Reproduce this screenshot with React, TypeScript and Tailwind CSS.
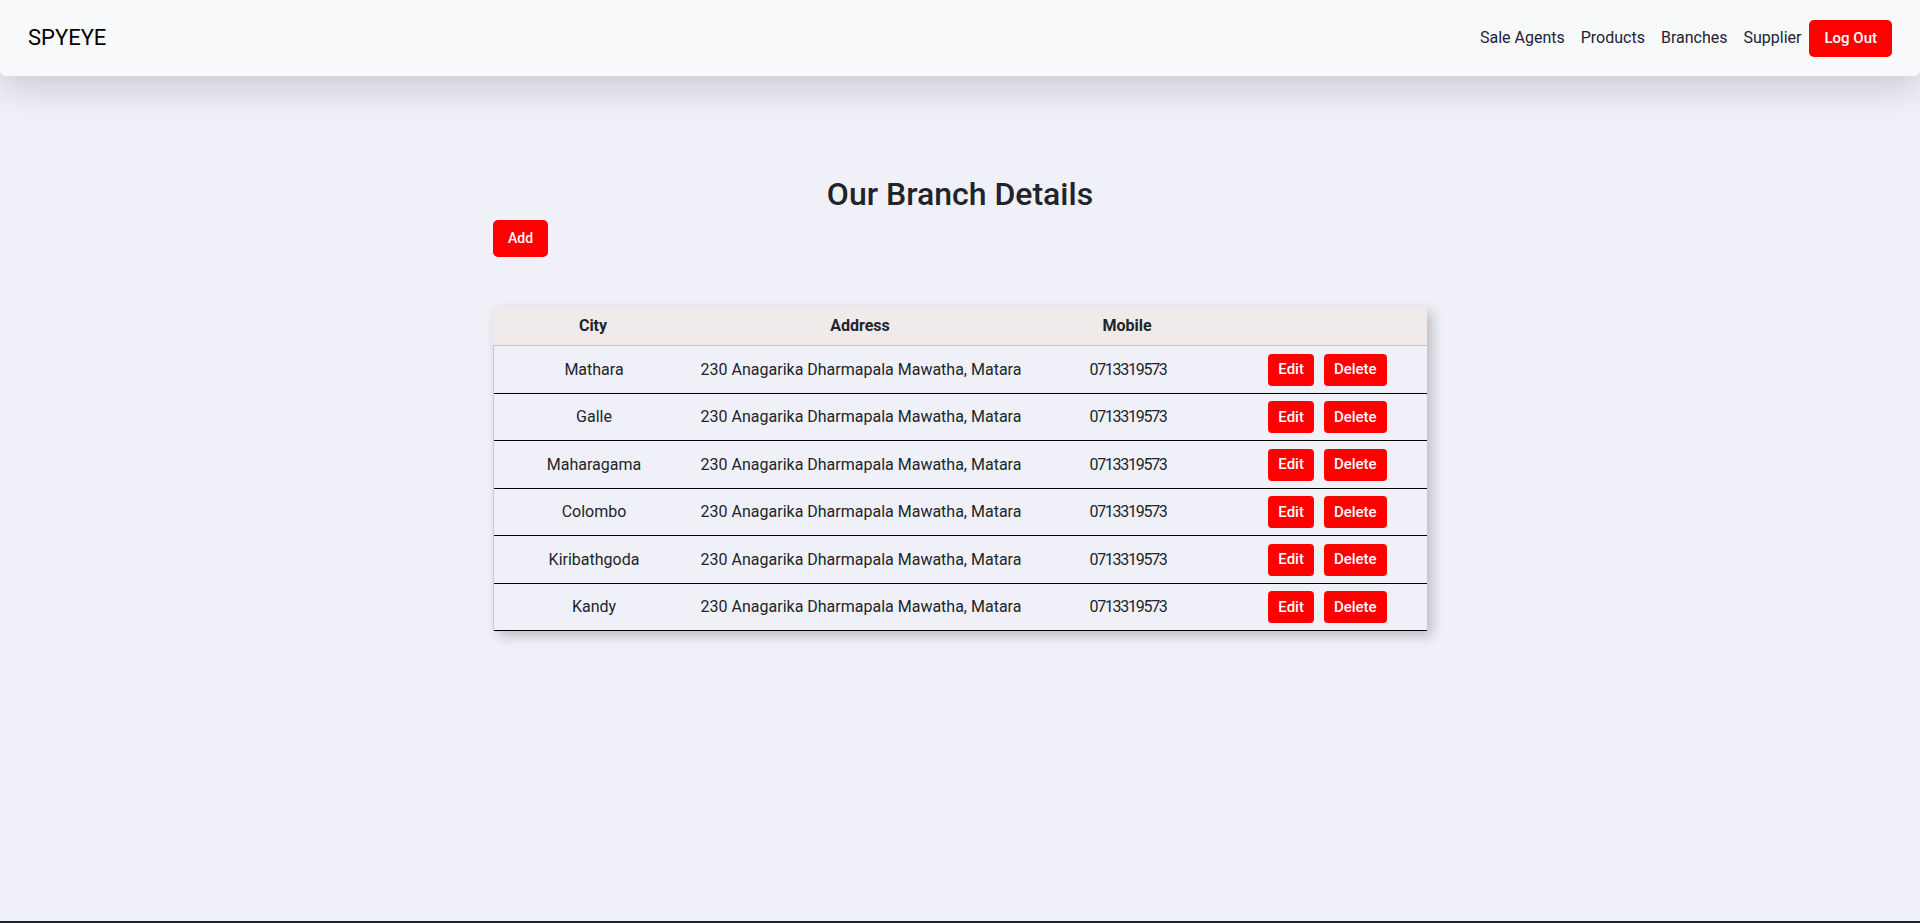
import React from "react";

const branches = [
  "Mathara",
  "Galle",
  "Maharagama",
  "Colombo",
  "Kiribathgoda",
  "Kandy",
];

export default function App() {
  return (
    <div className="min-h-screen bg-[#f0f0f8] text-[#212529] [font-family:Roboto,'Noto_Sans',sans-serif]">
      <div className="flex min-h-[921px] flex-col">
        <nav className="flex h-[76px] items-center justify-between rounded-b-[6px] bg-[#f8f9fb] px-[28px] shadow-[0_12px_36px_rgba(0,0,0,0.16)]">
          <span className="text-[22px] leading-none text-black">SPYEYE</span>
          <div className="flex items-center">
            <a className="px-2 text-[16px] text-[#1e2235]">Sale Agents</a>
            <a className="px-2 text-[16px] text-[#1e2235]">Products</a>
            <a className="px-2 text-[16px] text-[#1e2235]">Branches</a>
            <a className="px-2 text-[16px] text-[#1e2235]">Supplier</a>
            <button className="ml-0 h-[37px] rounded-[5px] bg-[#ff0000] px-[15px] text-[15px] font-medium text-white">
              Log Out
            </button>
          </div>
        </nav>

        <main className="mx-auto w-[934px] pt-[99px]">
          <h2 className="mb-[7px] text-center text-[32px] font-medium leading-[1.2]">
            Our Branch Details
          </h2>
          <button className="h-[37px] rounded-[5px] bg-[#ff0000] px-[15px] text-[14px] font-medium text-white">
            Add
          </button>

          <div className="mt-[50px] shadow-[5px_5px_12px_rgba(0,0,0,0.22)]">
            <div className="grid h-[39px] grid-cols-[200px_334px_200px_200px] items-center border-b border-[#c8c8c8] bg-[#f0eaea] text-[16px] font-bold">
              <div className="text-center">City</div>
              <div className="text-center">Address</div>
              <div className="text-center">Mobile</div>
              <div />
            </div>
            <div className="border-l border-[#c8c8c8]">
              {branches.map((city) => (
                <div
                  key={city}
                  className="grid h-[47.5px] grid-cols-[200px_334px_200px_199px] items-center border-b border-black text-[16px]"
                >
                  <div className="text-center">{city}</div>
                  <div className="text-center">230 Anagarika Dharmapala Mawatha, Matara</div>
                  <div className="text-center tracking-[-0.08em]">0713319573</div>
                  <div className="flex items-center justify-center gap-[10px]">
                    <button className="h-[32px] rounded-[4px] bg-[#ff0000] px-[10px] text-[15px] font-medium text-white">
                      Edit
                    </button>
                    <button className="h-[32px] rounded-[4px] bg-[#ff0000] px-[10px] text-[15px] font-medium text-white">
                      Delete
                    </button>
                  </div>
                </div>
              ))}
            </div>
          </div>
        </main>
      </div>
      <footer className="h-[60px] bg-[#212529]" />
    </div>
  );
}
